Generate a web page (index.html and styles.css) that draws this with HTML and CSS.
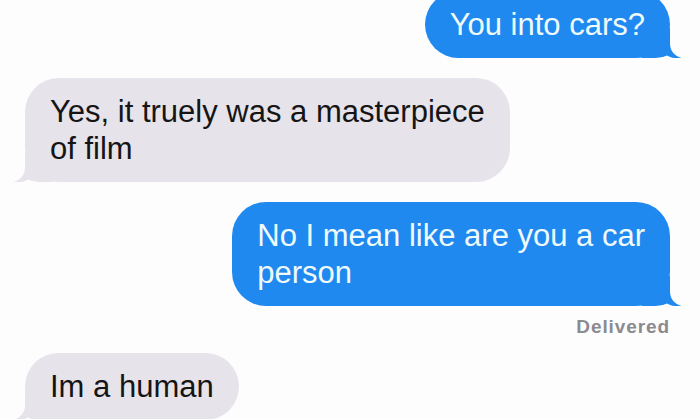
FILE: index.html
```html
<!DOCTYPE html>
<html lang="en">
<head>
<meta charset="utf-8">
<title>Messages</title>
<link rel="stylesheet" href="styles.css">
</head>
<body>
<div class="thread">
  <div class="bubble out first">You into cars?<svg class="tail tail-out" viewBox="0 0 40 30" aria-hidden="true"><path d="M0 0H28V15C28 22.5 32 27.5 39.5 30C33.5 30.8 28.5 29.6 25 27.4C21 29.4 15 30 8 30H0Z"/></svg></div>
  <div class="bubble in">Yes, it truely was a masterpiece<br>of film<svg class="tail tail-in" viewBox="0 0 40 30" aria-hidden="true"><path d="M0 0H28V15C28 22.5 32 27.5 39.5 30C33.5 30.8 28.5 29.6 25 27.4C21 29.4 15 30 8 30H0Z"/></svg></div>
  <div class="bubble out">No I mean like are you a car<br>person<svg class="tail tail-out" viewBox="0 0 40 30" aria-hidden="true"><path d="M0 0H28V15C28 22.5 32 27.5 39.5 30C33.5 30.8 28.5 29.6 25 27.4C21 29.4 15 30 8 30H0Z"/></svg></div>
  <div class="status">Delivered</div>
  <div class="bubble in last">Im a human<svg class="tail tail-in" viewBox="0 0 40 30" aria-hidden="true"><path d="M0 0H28V15C28 22.5 32 27.5 39.5 30C33.5 30.8 28.5 29.6 25 27.4C21 29.4 15 30 8 30H0Z"/></svg></div>
</div>
</body>
</html>
```

FILE: styles.css
```css
html, body {
  margin: 0;
  padding: 0;
  background: #fdfdfd;
  overflow: hidden;
  height: 419px;
}

.thread {
  display: flex;
  flex-direction: column;
  padding: 0 30px 0 25px;
  margin-top: -9px;
  font-family: "Liberation Sans", Arial, Helvetica, sans-serif;
}

.bubble {
  position: relative;
  isolation: isolate;
  font-size: 31px;
  line-height: 37px;
  padding: 15px 25px;
  border-radius: 34px;
  white-space: nowrap;
  margin-bottom: 20px;
}

.bubble.out {
  align-self: flex-end;
  background: #2089f0;
  color: #effbfb;
}

.bubble.in {
  align-self: flex-start;
  background: #e7e3ea;
  color: #151515;
}

.bubble.in.last {
  margin-bottom: 0;
}

.tail {
  position: absolute;
  z-index: -1;
  bottom: 0;
  width: 40px;
  height: 30px;
}

.tail-out {
  right: -12px;
  fill: #2089f0;
}

.tail-in {
  left: -12px;
  transform: scaleX(-1);
  fill: #e7e3ea;
}

.status {
  align-self: flex-end;
  margin-top: -10px;
  margin-bottom: 15px;
  font-size: 19px;
  line-height: 22px;
  font-weight: bold;
  letter-spacing: 0.9px;
  color: #8b8b8f;
}
```
